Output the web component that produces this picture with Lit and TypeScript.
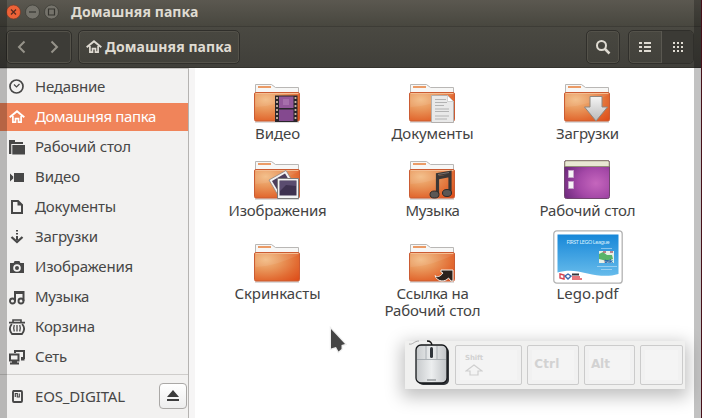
import { LitElement, html, svg, css, nothing, type TemplateResult } from "lit";
import { customElement, property } from "lit/decorators.js";

/** A line of text whose tracking is adjusted so it fills a given width. */
@customElement("fit-label")
class FitLabel extends LitElement {
  @property() text = "";
  @property({ type: Number }) width = 0;

  static styles = css`
    :host { display: block; white-space: nowrap; }
    .text { display: block; width: max-content; }
  `;

  updated() {
    const el = this.renderRoot.querySelector(".text") as HTMLElement;
    el.style.letterSpacing = "0px";
    const natural = el.getBoundingClientRect().width;
    const gap = (this.width - natural) / this.text.length;
    el.style.letterSpacing = `${gap.toFixed(3)}px`;
  }

  render() {
    return html`<span class="text">${this.text}</span>`;
  }
}

const glyphs: Record<string, TemplateResult> = {
  recent: svg`<circle cx="7.500" cy="7.500" r="6.500" fill="none" stroke="currentColor" stroke-width="1.700"/><path d="m5 5.500 2.500 2.500L10.500 5" fill="none" stroke="currentColor" stroke-width="1.200"/>`,
  home: svg`<path d="M.7 8.300 8 2.300l7.300 6" fill="none" stroke="currentColor" stroke-width="2"/><path d="M3.900 7v6.100h2.600V9.600h3v3.500h2.600V7" fill="none" stroke="currentColor" stroke-width="1.700"/>`,
  desktop: svg`<path d="M0 1h6v2h8v2H2.300v10H0z" fill="currentColor"/><path d="M3.300 6H16v9.500H3.300z" fill="currentColor"/>`,
  video: svg`<path d="M5 4h10v9H5zM1 4.500l3.200 3v2l-3.200 3z" fill="currentColor"/>`,
  docs: svg`<path d="M3 2h6l4 4v8H3z" fill="none" stroke="currentColor" stroke-width="2"/><path d="M8.500 2v4.500H13z" fill="currentColor"/>`,
  download: svg`<path d="M7 1h2v1.500H7zM7 4h2v1.500H7zM7 7h2v4H7z" fill="currentColor"/><path d="m2.500 8 5.500 5 5.500-5" fill="none" stroke="currentColor" stroke-width="2.300"/>`,
  photo: svg`<path d="M1 4h3.600l1-2h4.800l1 2H15v10H1z M8 5.200a3.800 3.800 0 1 0 0 7.600 3.800 3.800 0 0 0 0-7.600z" fill="currentColor" fill-rule="evenodd"/><circle cx="8" cy="9" r="2" fill="currentColor"/>`,
  music: svg`<path d="M6 12V3h8.500v9M6 4h8" fill="none" stroke="currentColor" stroke-width="2"/><circle cx="3.500" cy="12" r="2.500" fill="none" stroke="currentColor" stroke-width="1.900"/><circle cx="12" cy="12" r="2.500" fill="none" stroke="currentColor" stroke-width="1.900"/>`,
  trash: svg`<path d="M0 3.600h16M4 3V1h8v2" fill="none" stroke="currentColor" stroke-width="1.600"/><path d="M2.800 5C.5 8 .5 12 3 15h10c2.500-3 2.500-7 .2-10" fill="none" stroke="currentColor" stroke-width="1.800"/><path d="M5.300 6c-.8 2-.8 4.500 0 6.500M8 6v6.500M10.700 6c.8 2 .8 4.500 0 6.500" fill="none" stroke="currentColor" stroke-width="1.300"/>`,
  network: svg`<path d="M6 4V2h9v7h-3" fill="none" stroke="currentColor" stroke-width="2"/><path d="M1 5.500h8.500v6H1z" fill="none" stroke="currentColor" stroke-width="2"/><path d="M3 12h5v1.500H3zM1 13.500h9v2H1zM12 9.500h3.500v2H12z" fill="currentColor"/>`,
  card: svg`<path d="M4.500 3H12a1 1 0 0 1 1 1v9a1 1 0 0 1-1 1H5a1 1 0 0 1-1-1V4z" fill="none" stroke="currentColor" stroke-width="1.900"/><path d="M6.300 9V5.500h2V9h2V5.500" fill="none" stroke="currentColor" stroke-width="1.200"/>`,
};

const glyph = (name: string) =>
  html`<svg class="glyph" width="16" height="16" viewBox="0 0 16 16">${glyphs[name]}</svg>`;

const emblems: Record<string, TemplateResult> = {
  video: svg`<path d="M21 12.500h22.500V39H21z" fill="#29262b"/><path d="M25 13.500h14.500V25H25z" fill="#94589b"/><path d="M25 26.500h14.500V38H25z" fill="#84498f"/><path d="M29 16h6v6h-6z" fill="#b37fb5" opacity=".6"/><path d="M23 14v24M41.500 14v24" stroke="#c9b6a4" stroke-width="1.800" stroke-dasharray="2 2"/>`,
  docs: svg`<path d="M22.500 12.500h16l6 6v21h-22z" fill="#e9e9e9" stroke="#b3b0ae"/><path d="m38.500 12.500 6 6h-6z" fill="#fff" stroke="#c4c4c4" stroke-width=".7"/><path d="M26 16.500h11M26 19.500h12M26 22.500h9M26 26h14M26 28.500h14M26 33h14M26 36h12" stroke="#adadad" stroke-width=".9"/>`,
  download: svg`<path d="M26 13.500h12V24h5.500L32 38 20.500 24H26z" fill="url(#silver)" stroke="#8d8780"/>`,
  photo: svg`<path d="m15 20 17-9.500 11 18-17 10z" fill="#f3f3f3" stroke="#8c8585" stroke-width=".8"/><path d="m18 21 13-7.500 8 13-13 8z" fill="#4c3e5b"/><path d="M23.500 18.500h21v20h-21z" fill="#f3f3f3" stroke="#7c7c7c"/><path d="M25.500 20.500h17v15h-17z" fill="#3e3250"/><path d="m26 31 6-6 10 1v-5H26z" fill="#67577c" opacity=".7"/>`,
  music: svg`<path d="M28.500 34V14.500l12.500-2v20M28.500 18l12.500-2.500" fill="none" stroke="#3b3735" stroke-width="3.200"/><ellipse cx="25.500" cy="34.500" rx="4.500" ry="3.500" fill="#5a5755" stroke="#2d2a29"/><ellipse cx="38" cy="33" rx="4.500" ry="3.500" fill="#5a5755" stroke="#2d2a29"/><path d="m29 14.500 11-2" stroke="#77716d"/>`,
  link: svg`<path d="M26 32.500c2 2 5 1.500 8-2.500l-2-1v-2h12V38h-2l-2.500-3C36 39.500 28 39 26 32.500z" fill="#2b221d" stroke="#f5eee8" stroke-width="1"/>`,
};

const folder = (emblem?: string) => html`
  <svg class="folder" width="48" height="40" viewBox="0 0 48 40">
    <defs>
      <radialGradient id="orange" cx=".25" cy=".25" r="1">
        <stop offset="0" stop-color="#f2bb83" /><stop offset=".35" stop-color="#e9965a" />
        <stop offset=".7" stop-color="#e26c33" /><stop offset="1" stop-color="#de4e1a" />
      </radialGradient>
      <linearGradient id="silver" x1="0" y1="0" x2="0" y2="1">
        <stop offset="0" stop-color="#f5f5f5" /><stop offset="1" stop-color="#b9b9b9" />
      </linearGradient>
    </defs>
    <path d="M1 39h44" stroke="#000" opacity=".18" stroke-width="1.500" />
    <path d="M1.500 12V1.500h16l4 3h23V12z" fill="#f7f7f6" stroke="#b9b7b5" />
    <path d="M4 4h13" stroke="#eb9b66" stroke-width="2" />
    <rect x=".5" y="9.500" width="45" height="28.500" rx="1.500" fill="url(#orange)" stroke="#cb5c33" />
    <path d="M1.500 10.500h43" stroke="#f4bd91" />
    <path d="M1.500 24c17-1 27-5 43-12v-1h-43z" fill="#fff" opacity=".08" />
    ${emblem ? emblems[emblem] : nothing}
  </svg>`;

const desktopIcon = html`
  <svg class="folder" width="48" height="40" viewBox="0 0 48 40">
    <defs><radialGradient id="purple" cx=".7" cy=".6" r=".8">
      <stop offset="0" stop-color="#c566bd" /><stop offset=".5" stop-color="#a448a7" /><stop offset="1" stop-color="#6b287b" />
    </radialGradient></defs>
    <rect x=".5" y=".5" width="45" height="38" rx="2" fill="url(#purple)" stroke="#71466f" />
    <path d="M.8 6.500V2.500Q.8.800 2.500.8h41Q45.200.8 45.200 2.500v4z" fill="#e9e8d4" stroke="#8f8f70" stroke-width=".9" />
    <path d="M4.500 10.500h5v7h-5zM4.500 21.500h5v7h-5z" fill="#f6f3f6" stroke="#c7a5ca" />
  </svg>`;

const pdfThumb = html`
  <svg class="thumb" width="70" height="54" viewBox="0 0 70 54">
    <defs><linearGradient id="sky" x1="0" y1="0" x2="0" y2="1">
      <stop offset="0" stop-color="#1787d8" /><stop offset="1" stop-color="#66bbeb" />
    </linearGradient></defs>
    <rect x=".8" y=".8" width="68.400" height="52.400" rx="3" fill="#fff" stroke="#b3b3b3" stroke-width="1.300" />
    <path d="M4.500 4.500h61V44c-10 3-20 2-31-.500-11-3-20-4-30-1z" fill="url(#sky)" />
    <text class="league" x="13.500" y="13.500" textLength="43">FIRST LEGO League</text>
    <path d="M46 21h15v12H46z" fill="#e7f0e8" />
    <path d="m46 24 4-2 4 3 5 0 1 4-6 2-4-1-4-1z" fill="#58b46a" />
    <path d="M50 22h3M57 22h3" stroke="#a9606f" stroke-width="1.500" />
    <text class="trek" x="51" y="33" textLength="9">trek</text>
    <path d="M48 18.500h11M44 36.500h20M48 39.500h11" stroke="#c5e3f5" stroke-width=".6" />
    <path d="m7 44 4 1v4l-4-1z" fill="none" stroke="#d74250" stroke-width="1.400" />
    <path d="m12 46 3-2 3 2-3 3z" fill="none" stroke="#3a67af" stroke-width="1.400" />
    <path d="M19 44.500h7" stroke="#34343c" stroke-width="2" /><path d="M19 47h8M19 49h10" stroke="#df4951" stroke-width="1.300" />
  </svg>`;

interface Place { icon: string; name: string; width: number; active?: boolean }
const places: Place[] = [
  { icon: "recent", name: "Недавние", width: 70 },
  { icon: "home", name: "Домашняя папка", width: 121, active: true },
  { icon: "desktop", name: "Рабочий стол", width: 96 },
  { icon: "video", name: "Видео", width: 45 },
  { icon: "docs", name: "Документы", width: 81 },
  { icon: "download", name: "Загрузки", width: 63 },
  { icon: "photo", name: "Изображения", width: 98 },
  { icon: "music", name: "Музыка", width: 54 },
  { icon: "trash", name: "Корзина", width: 60 },
  { icon: "network", name: "Сеть", width: 32 },
];

interface Item { art: TemplateResult; lines: [string, number][] }
const items: Item[] = [
  { art: folder("video"), lines: [["Видео", 45]] },
  { art: folder("docs"), lines: [["Документы", 82]] },
  { art: folder("download"), lines: [["Загрузки", 63]] },
  { art: folder("photo"), lines: [["Изображения", 98]] },
  { art: folder("music"), lines: [["Музыка", 54]] },
  { art: desktopIcon, lines: [["Рабочий стол", 96]] },
  { art: folder(), lines: [["Скринкасты", 86]] },
  { art: folder("link"), lines: [["Ссылка на", 72], ["Рабочий стол", 96]] },
  { art: pdfThumb, lines: [["Lego.pdf", 62]] },
];

@customElement("app-root")
class AppRoot extends LitElement {
  static styles = css`
    :host {
      display: flex; flex-direction: column; position: relative;
      width: 702px; height: 418px; overflow: hidden; background: #fff;
      font: 15px/18px "Noto Sans", "Open Sans", sans-serif; color: #434343;
    }
    * { box-sizing: border-box; }
    svg { display: block; flex: none; }

    .titlebar {
      height: 26px; flex: none; display: flex; align-items: center; padding: 0 0 2px 6px;
      background: linear-gradient(#5b5850, #48473f); color: #dfdbd2;
      font-weight: 700; font-size: 14px;
    }
    .dot { margin-right: 4px; }
    .title { margin-left: 8px; }

    .toolbar {
      height: 42px; flex: none; display: flex; align-items: flex-start; padding: 3px 8px 0 6px;
      background: linear-gradient(#4a4942, #403f3a); border-top: 1px solid #3d3c36;
      border-bottom: 1px solid #34332e; color: #dfdbd2;
    }
    .group {
      height: 34px; display: flex; align-items: center; border: 1px solid #302f2b; border-radius: 5px;
      background: linear-gradient(#484740, #42413b); box-shadow: inset 0 0 0 1px #54524a;
    }
    .nav { width: 66px; justify-content: space-between; padding: 0 11px 0 9px; background: #3d3c37; }
    .crumb { width: 162px; margin-left: 6px; padding-left: 7px; gap: 3px; font-weight: 700; font-size: 14px; }
    .search { width: 34px; margin-left: auto; justify-content: center; }
    .views { width: 66px; margin-left: 8px; }
    .view { width: 32px; height: 32px; display: flex; align-items: center; justify-content: center; }
    .pressed { background: #3b3a35; border-left: 1px solid #5a5851; border-radius: 0 4px 4px 0; }

    .body { flex: 1; display: flex; min-height: 0; }
    .sidebar {
      width: 189px; flex: none; display: flex; flex-direction: column; gap: 2px; padding-top: 4px;
      background: #f2f1f0; border-right: 1px solid #b5b3b1; border-top: 1px solid #c6c4c2;
    }
    .place { height: 28px; flex: none; display: flex; align-items: center; gap: 10px; padding-left: 9px; color: #474747; }
    .place fit-label { padding-bottom: 2px; }
    .active { background: #f0845a; color: #fff; }
    .devices { height: 42px; margin-top: 1px; border-top: 1px solid #cfcdcb; display: flex; align-items: center; }
    .devices .place fit-label { padding-bottom: 0; }
    .devices .glyph { margin-top: 1px; }
    .eject {
      width: 28px; height: 26px; margin: 0 1px 0 auto; display: flex; align-items: center; justify-content: center;
      border: 1px solid #aaa8a6; border-radius: 4px; background: linear-gradient(#fff, #ededed);
    }
    .gutter { width: 6px; flex: none; background: #f6f5f5; }

    .files {
      width: 465px; margin-left: 5px; padding-top: 15px; display: grid;
      grid-template-columns: repeat(3, 155px); grid-template-rows: 77px 70px 90px;
    }
    .item { display: flex; flex-direction: column; align-items: center; line-height: 18px; }
    .art { height: 40px; width: 48px; margin-bottom: 1px; display: flex; justify-content: center; align-items: flex-end; }
    .last .art { height: 53px; margin-bottom: 2px; }
    .last { line-height: 17px; }
    .thumb { margin-bottom: -1px; }
    .league { font: 5.500px "Noto Sans", sans-serif; fill: #d9f0fc; }
    .trek { font: 700 6px "Noto Sans", sans-serif; fill: #1d63a8; }

    .edge { position: absolute; top: 0; bottom: 0; width: 7px; background: rgba(0, 0, 0, 0.24); }
    .edge-left { left: 0; }
    .edge-right { right: 0; width: 8px; border-right: 1px solid #47101a; }
    .pointer { position: absolute; left: 329px; top: 326px; }

    .keys {
      position: absolute; left: 405px; top: 341px; width: 280px; height: 48px;
      display: flex; align-items: flex-start; padding: 4px 2px 0 50px; gap: 5px;
      background: #f0f0ef; box-shadow: 0 5px 16px 3px rgba(0, 0, 0, 0.25);
      font: 700 12px/14px "DejaVu Sans", sans-serif; color: #d2d2d2;
    }
    .mouse { position: absolute; left: 4px; top: -1px; }
    .key {
      height: 40px; display: flex; align-items: center; padding: 0 0 3px 6px;
      border: 1px solid #cbcbcb; border-radius: 2px; background: #f4f4f4;
      box-shadow: inset 0 0 0 4px #f1f1f1;
    }
    .shift { width: 68px; flex-direction: column; align-items: flex-start; justify-content: center; gap: 1px; padding: 0 0 1px 9px; font-size: 7px; line-height: 9px; }
    .wide { width: 52px; }
    .blank { width: 43px; }
  `;

  render() {
    return html`
      <div class="titlebar">
        <svg class="dot" width="15" height="16" viewBox="0 0 15 16"><circle cx="7.500" cy="8" r="7" fill="#ed6237" stroke="#793b28" stroke-width=".7"/><path d="m5 5.500 5 5m0-5-5 5" stroke="#572b20" stroke-width="1.300"/></svg>
        <svg class="dot" width="15" height="16" viewBox="0 0 15 16"><circle cx="7.500" cy="8" r="7" fill="#75736b" stroke="#3a3934" stroke-width=".7"/><path d="M4 8h7" stroke="#35342f" stroke-width="1.200"/></svg>
        <svg class="dot" width="15" height="16" viewBox="0 0 15 16"><circle cx="7.500" cy="8" r="7" fill="#75736b" stroke="#3a3934" stroke-width=".7"/><path d="M4.500 5h6v6h-6z" fill="none" stroke="#35342f" stroke-width="1.200"/></svg>
        <fit-label class="title" text="Домашняя папка" width="127.500"></fit-label>
      </div>
      <div class="toolbar">
        <div class="group nav">
          <svg width="12" height="14" viewBox="0 0 12 14"><path d="M8.500 1.500 3 7l5.500 5.500" fill="none" stroke="#96938a" stroke-width="2"/></svg>
          <svg width="12" height="14" viewBox="0 0 12 14"><path d="M3.500 1.500 9 7l-5.500 5.500" fill="none" stroke="#96938a" stroke-width="2"/></svg>
        </div>
        <div class="group crumb">${glyph("home")}<fit-label text="Домашняя папка" width="127"></fit-label></div>
        <div class="group search"><svg width="16" height="16" viewBox="0 0 16 16"><circle cx="6.500" cy="6.500" r="4.500" fill="none" stroke="currentColor" stroke-width="2"/><path d="m9.500 9.500 5 5" stroke="currentColor" stroke-width="2.500"/></svg></div>
        <div class="group views">
          <div class="view"><svg width="12" height="12" viewBox="0 0 12 12"><path d="M0 1h3v2H0zM5 1h7v2H5zM0 5h3v2H0zM5 5h7v2H5zM0 9h3v2H0zM5 9h7v2H5z" fill="currentColor"/></svg></div>
          <div class="view pressed"><svg width="12" height="12" viewBox="0 0 12 12"><path d="M1 1h2v2H1zM5 1h2v2H5zM9 1h2v2H9zM1 5h2v2H1zM5 5h2v2H5zM9 5h2v2H9zM1 9h2v2H1zM5 9h2v2H5zM9 9h2v2H9z" fill="currentColor"/></svg></div>
        </div>
      </div>
      <div class="body">
        <div class="sidebar">
          ${places.map((p) => html`<div class="place ${p.active ? "active" : ""}">${glyph(p.icon)}<fit-label .text=${p.name} .width=${p.width}></fit-label></div>`)}
          <div class="devices">
            <div class="place">${glyph("card")}<fit-label text="EOS_DIGITAL" width="90"></fit-label></div>
            <div class="eject"><svg width="12" height="12" viewBox="0 0 12 12"><path d="m6 0 6 7H0zM0 9h12v2H0z" fill="#3c3c3c"/></svg></div>
          </div>
        </div>
        <div class="gutter"></div>
        <div class="files">
          ${items.map((it, i) => html`<div class="item ${i > 5 ? "last" : ""}">
            <div class="art">${it.art}</div>
            ${it.lines.map(([t, w]) => html`<fit-label .text=${t} .width=${w}></fit-label>`)}
          </div>`)}
        </div>
      </div>
      <div class="keys">
        <svg class="mouse" width="44" height="48" viewBox="0 0 44 48">
          <defs><linearGradient id="shell" x1="0" y1="0" x2="1" y2="0"><stop offset="0" stop-color="#c6c9cb"/><stop offset=".5" stop-color="#eceeef"/><stop offset="1" stop-color="#c0c3c6"/></linearGradient></defs>
          <path d="M0 4c4 1 5-3 10-3" fill="none" stroke="#aaa"/>
          <path d="M18 1q5 0 5 5" fill="none" stroke="#111" stroke-width="1.300"/>
          <rect x="9" y="7" width="31" height="38" rx="5" fill="#33363a"/>
          <rect x="7" y="5" width="31" height="38" rx="5" fill="url(#shell)" stroke="#15171a" stroke-width="1.300"/>
          <path d="M8 19.500h29M17 6v13M28 6v13" stroke="#9ea5aa" stroke-width=".8"/>
          <rect x="21" y="7" width="3" height="11" rx="1.500" fill="#30353b"/>
          <path d="M18 40h9" stroke="#979b9e" stroke-width="1.500"/>
        </svg>
        <div class="key shift"><fit-label text="Shift" width="18"></fit-label>
          <svg width="18" height="12" viewBox="0 0 18 12"><path d="m9 1 8 6h-4v4H5V7H1z" fill="none" stroke="#cfcfcf" stroke-width="1.200"/></svg></div>
        <div class="key wide"><fit-label text="Ctrl" width="25"></fit-label></div>
        <div class="key wide"><fit-label text="Alt" width="19"></fit-label></div>
        <div class="key blank"></div>
      </div>
      <svg class="pointer" width="20" height="30" viewBox="0 0 20 30"><path d="M2 3v19.500l5-1.500 2.500 4.500 3-2.500v-4l3.500-1z" fill="#454545" stroke="#eee" stroke-width="2.500" paint-order="stroke"/></svg>
      <div class="edge edge-left"></div>
      <div class="edge edge-right"></div>
    `;
  }
}
